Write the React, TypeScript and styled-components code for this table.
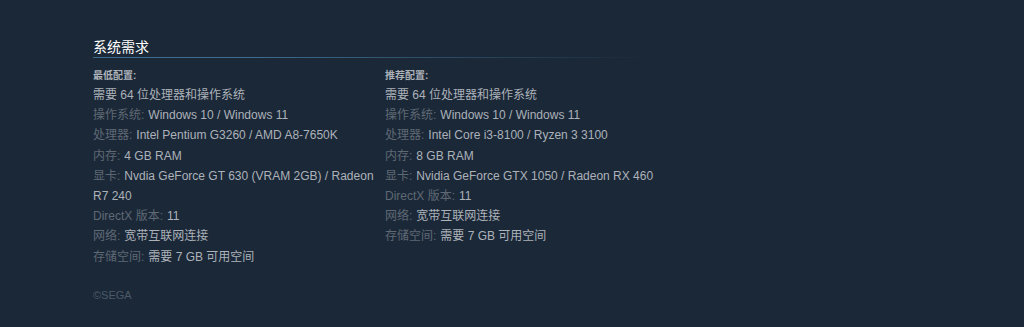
import styled, { createGlobalStyle } from "styled-components";

const GlobalStyle = createGlobalStyle`
  html, body {
    margin: 0;
    padding: 0;
    background: #1b2838;
  }
  body {
    font-family: "Liberation Sans", Arial, "Noto Sans CJK SC", sans-serif;
  }
`;

type Req = { label?: string; value: string };

const minimum: Req[] = [
  { value: "需要 64 位处理器和操作系统" },
  { label: "操作系统:", value: "Windows 10 / Windows 11" },
  { label: "处理器:", value: "Intel Pentium G3260 / AMD A8-7650K" },
  { label: "内存:", value: "4 GB RAM" },
  { label: "显卡:", value: "Nvdia GeForce GT 630 (VRAM 2GB) / Radeon R7 240" },
  { label: "DirectX 版本:", value: "11" },
  { label: "网络:", value: "宽带互联网连接" },
  { label: "存储空间:", value: "需要 7 GB 可用空间" },
];

const recommended: Req[] = [
  { value: "需要 64 位处理器和操作系统" },
  { label: "操作系统:", value: "Windows 10 / Windows 11" },
  { label: "处理器:", value: "Intel Core i3-8100 / Ryzen 3 3100" },
  { label: "内存:", value: "8 GB RAM" },
  { label: "显卡:", value: "Nvidia GeForce GTX 1050 / Radeon RX 460" },
  { label: "DirectX 版本:", value: "11" },
  { label: "网络:", value: "宽带互联网连接" },
  { label: "存储空间:", value: "需要 7 GB 可用空间" },
];

const Section = styled.section`
  width: 616px;
  padding: 37px 0 0 93px;
`;

const Heading = styled.h2`
  margin: 0;
  font-size: 14px;
  line-height: 20px;
  font-weight: normal;
  color: #ffffff;
  text-transform: uppercase;
  border-bottom: 1px solid transparent;
  border-image: linear-gradient(
      to right,
      #3c6d8f 0%,
      #3c6d8f 25%,
      rgba(60, 109, 143, 0) 90%
    )
    1;
`;

const Columns = styled.div`
  display: grid;
  grid-template-columns: 284px 284px;
  column-gap: 8px;
`;

const Column = styled.div`
  display: flex;
  flex-direction: column;
`;

const ColTitle = styled.div`
  margin-top: 9px;
  font-size: 10px;
  line-height: 18px;
  font-weight: bold;
  color: #acb2b8;
`;

const List = styled.ul`
  list-style: none;
  margin: 0;
  padding: 0;
`;

const Item = styled.li`
  font-size: 12px;
  line-height: 20.2px;
  color: #acb2b8;
`;

const Label = styled.span`
  color: #5f6974;
  margin-right: 4px;
`;

const Legal = styled.div`
  margin-top: 18px;
  font-size: 11px;
  line-height: 20px;
  color: #4c5966;
`;

function ReqColumn({ title, items }: { title: string; items: Req[] }) {
  return (
    <Column>
      <ColTitle>{title}</ColTitle>
      <List>
        {items.map((it, i) => (
          <Item key={i}>
            {it.label && <Label>{it.label}</Label>}
            {it.value}
          </Item>
        ))}
      </List>
    </Column>
  );
}

export default function App() {
  return (
    <>
      <GlobalStyle />
      <Section>
        <Heading>系统需求</Heading>
        <Columns>
          <ReqColumn title="最低配置:" items={minimum} />
          <ReqColumn title="推荐配置:" items={recommended} />
        </Columns>
        <Legal>©SEGA</Legal>
      </Section>
    </>
  );
}
